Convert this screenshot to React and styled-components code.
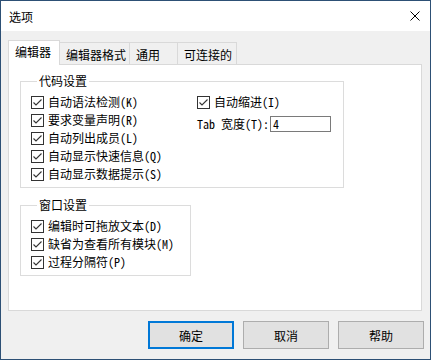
import styled, { createGlobalStyle } from "styled-components";

const GlobalStyle = createGlobalStyle`
  html, body {
    margin: 0;
    padding: 0;
    background: #f0f0f0;
  }
  * {
    box-sizing: border-box;
  }
`;

const ui = `"Noto Sans CJK SC", "Noto Sans", sans-serif`;
const mono = `"Noto Sans Mono CJK SC", "Noto Sans CJK SC", "Liberation Mono", monospace`;

const Window = styled.div`
  width: 431px;
  height: 360px;
  border: 1px solid #2d5075;
  background: #f0f0f0;
  display: flex;
  flex-direction: column;
  font-family: ${ui};
  font-size: 12px;
  color: #000;
`;

const TitleBar = styled.div`
  height: 30px;
  background: #fff;
  display: flex;
  align-items: center;
  justify-content: space-between;
  padding: 0 10px 0 8px;
  font-size: 12px;
`;

const Body = styled.div`
  padding: 9px 8px 0 7px;
`;

const TabRow = styled.div`
  height: 24px;
  display: flex;
  align-items: flex-end;
`;

const Tab = styled.div`
  position: relative;
  width: ${(p) => p.$w}px;
  height: ${(p) => (p.$active ? 25 : 22)}px;
  margin-left: ${(p) => (p.$first ? 0 : -1)}px;
  margin-bottom: ${(p) => (p.$active ? -1 : 0)}px;
  z-index: ${(p) => (p.$active ? 2 : 1)};
  background: ${(p) => (p.$active ? "#fff" : "#f0f0f0")};
  border: 1px solid #d9d9d9;
  border-bottom: none;
  display: flex;
  align-items: center;
  padding: ${(p) => (p.$active ? "0 0 3px 6px" : "2px 0 0 6px")};
  white-space: nowrap;
`;

const Panel = styled.div`
  width: 414px;
  height: 247px;
  background: #fff;
  border: 1px solid #d9d9d9;
  padding: 9px 0 0 11px;
`;

const Group = styled.fieldset`
  width: ${(p) => p.$w}px;
  margin: ${(p) => p.$top}px 0 0 0;
  padding: 5px 0 4px 10px;
  border: 1px solid #dcdcdc;
  min-width: 0;
`;

const Legend = styled.legend`
  margin-left: 6px;
  padding: 0 2px;
  line-height: 14px;
  font-size: 12px;
  font-family: ${ui};
`;

const Columns = styled.div`
  display: grid;
  grid-template-columns: 166px 1fr;
`;

const Column = styled.div`
  display: flex;
  flex-direction: column;
  gap: ${(p) => p.$gap || 0}px;
`;

const CheckRow = styled.div`
  height: 18px;
  display: flex;
  align-items: center;
  gap: 4px;
`;

const Label = styled.span`
  font-family: ${mono};
  font-size: 12px;
  line-height: 18px;
  white-space: nowrap;
`;

const FieldRow = styled.div`
  height: 18px;
  display: flex;
  align-items: center;
  gap: 1px;
`;

const TextBox = styled.div`
  width: 61px;
  height: 16px;
  border: 1px solid #7a7a7a;
  background: #fff;
  padding: 0 2px;
  font-family: ${mono};
  font-size: 12px;
  line-height: 14px;
`;

const ButtonRow = styled.div`
  display: flex;
  justify-content: flex-end;
  gap: 9px;
  padding: 10px 6px 0 0;
`;

const Button = styled.div`
  width: 86px;
  height: 28px;
  background: #e1e1e1;
  border: ${(p) => (p.$default ? "2px solid #0078d7" : "1px solid #adadad")};
  display: flex;
  align-items: center;
  justify-content: center;
  font-size: 12px;
`;

const Check = () => (
  <svg width="13" height="13" viewBox="0 0 13 13">
    <rect x="0.5" y="0.5" width="12" height="12" fill="#fff" stroke="#333" />
    <path d="M2.5 6.5 L5 9 L10.5 3.5" fill="none" stroke="#333" strokeWidth="1.1" />
  </svg>
);

const CloseIcon = () => (
  <svg width="10" height="10" viewBox="0 0 10 10">
    <path d="M0.5 0.5 L9.5 9.5 M9.5 0.5 L0.5 9.5" stroke="#000" strokeWidth="1" />
  </svg>
);

const CheckItem = ({ text }) => (
  <CheckRow>
    <Check />
    <Label>{text}</Label>
  </CheckRow>
);

const tabs = [
  { name: "编辑器", w: 52, active: true },
  { name: "编辑器格式", w: 71 },
  { name: "通用", w: 49 },
  { name: "可连接的", w: 60 },
];

const codeOptions = [
  "自动语法检测(K)",
  "要求变量声明(R)",
  "自动列出成员(L)",
  "自动显示快速信息(Q)",
  "自动显示数据提示(S)",
];

const windowOptions = ["编辑时可拖放文本(D)", "缺省为查看所有模块(M)", "过程分隔符(P)"];

export default function App() {
  return (
    <>
      <GlobalStyle />
      <Window>
        <TitleBar>
          <span>选项</span>
          <CloseIcon />
        </TitleBar>
        <Body>
          <TabRow>
            {tabs.map((t, i) => (
              <Tab key={t.name} $w={t.w} $active={t.active} $first={i === 0}>
                {t.name}
              </Tab>
            ))}
          </TabRow>
          <Panel>
            <Group $w={324} $top={0}>
              <Legend>代码设置</Legend>
              <Columns>
                <Column>
                  {codeOptions.map((o) => (
                    <CheckItem key={o} text={o} />
                  ))}
                </Column>
                <Column $gap={4}>
                  <CheckItem text="自动缩进(I)" />
                  <FieldRow>
                    <Label>Tab 宽度(T):</Label>
                    <TextBox>4</TextBox>
                  </FieldRow>
                </Column>
              </Columns>
            </Group>
            <Group $w={171} $top={10}>
              <Legend>窗口设置</Legend>
              <Column>
                {windowOptions.map((o) => (
                  <CheckItem key={o} text={o} />
                ))}
              </Column>
            </Group>
          </Panel>
        </Body>
        <ButtonRow>
          <Button $default>确定</Button>
          <Button>取消</Button>
          <Button>帮助</Button>
        </ButtonRow>
      </Window>
    </>
  );
}
